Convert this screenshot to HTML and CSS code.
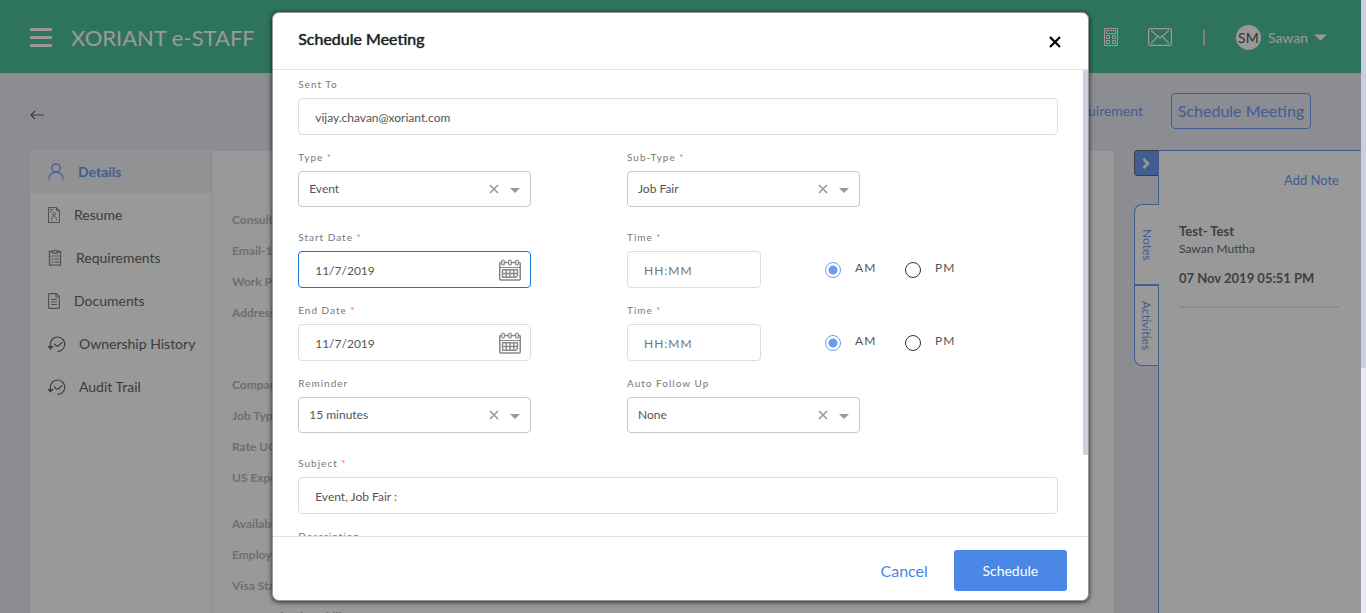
FILE: index.html
```html
<!DOCTYPE html>
<html lang="en">
<head>
<meta charset="utf-8">
<title>XORIANT e-STAFF</title>
<meta name="viewport" content="width=device-width, initial-scale=1">
<link rel="stylesheet" href="styles.css">
</head>
<body>
<svg class="defs" width="0" height="0" aria-hidden="true">
  <symbol id="calendar" viewBox="0 0 22 22">
    <g fill="none" stroke="currentColor">
      <rect x="0.75" y="3.5" width="20.5" height="17.5" rx="1" stroke-width="1.5"/>
      <path d="M1 8.5h20" stroke-width="1"/>
      <rect x="2.7" y="1" width="2.6" height="5" rx="1.3" fill="#fff" stroke-width="1.2"/>
      <rect x="9.7" y="1" width="2.6" height="5" rx="1.3" fill="#fff" stroke-width="1.2"/>
      <rect x="16.7" y="1" width="2.6" height="5" rx="1.3" fill="#fff" stroke-width="1.2"/>
      <path d="M3 10.8h16M3 14.5h16M3 18.2h14M3.5 10.8v7.4M7.3 10.8v7.4M11 10.8v7.4M14.8 10.8v7.4M18.5 10.8v5.5l-2 2" stroke-width="1.4"/>
    </g>
  </symbol>
  <symbol id="cross" viewBox="0 0 10 10"><path d="M1 1l8 8M9 1l-8 8" stroke="currentColor" stroke-width="1.6" fill="none"/></symbol>
  <symbol id="caret" viewBox="0 0 10 5"><path d="M0 0h10L5 5z" fill="currentColor"/></symbol>
  <symbol id="history" viewBox="0 0 18 18">
    <g fill="none" stroke="currentColor" stroke-width="1.2">
      <path d="M2.4 12.5V9A7.2 7.2 0 1 1 9.5 16.4"/>
      <path d="M0.3 11.5h4.2l-2.1 2.3zM6 8.6l2.6 2.6h1.4l4.4-4"/>
    </g>
  </symbol>
</svg>

<div class="page">
  <div class="app">
    <header class="topbar">
      <button class="menu" aria-label="Menu"><span></span><span></span><span></span></button>
      <span class="brand">XORIANT e-STAFF</span>
      <svg class="tb-calc" width="14" height="18" viewBox="0 0 14 18" fill="none" stroke="currentColor" stroke-width="1">
        <path d="M.5.5h13v17H.5zM2.5 2.5h9v3h-9zM2.5 7.5h3v3h-3zM8.5 7.5h3v3h-3zM2.5 12.5h3v3h-3zM8.5 12.5h3v3h-3z"/>
      </svg>
      <svg class="tb-mail" width="24" height="18" viewBox="0 0 24 18" fill="none" stroke="currentColor" stroke-width="1.2">
        <rect x=".6" y=".6" width="22.8" height="16.8" rx="1.5"/><path d="M3 2.5l9 7.5 9-7.5M3 15.5l6.5-7M21 15.5l-6.5-7"/>
      </svg>
      <span class="tb-sep"></span>
      <button class="user"><span class="avatar">SM</span>Sawan<svg width="13" height="7" viewBox="0 0 10 5"><use href="#caret"/></svg></button>
    </header>

    <div class="toolbar">
      <a class="back" href="#" aria-label="Back"><svg width="15" height="10" viewBox="0 0 15 10" fill="none" stroke="currentColor" stroke-width="1.2"><path d="M14 5H1M5 1L1 5l4 4"/></svg></a>
      <a class="link" href="#">Add Requirement</a>
      <button class="outline">Schedule Meeting</button>
    </div>

    <div class="content">
      <nav class="side">
        <a class="active" href="#"><svg width="16" height="17" viewBox="0 0 16 17" fill="none" stroke="currentColor" stroke-width="1.3"><circle cx="8" cy="5" r="4.2"/><path d="M.8 16.5c0-4.5 3-7.3 7.2-7.3s7.2 2.8 7.2 7.3"/></svg><span>Details</span></a>
        <a href="#"><svg width="12" height="16" viewBox="0 0 12 16" fill="none" stroke="currentColor"><path d="M.5.5h8l3 3v12H.5zM8.5.5v3h3"/><path d="M2 2.5h3M2 4.5h2"/><circle cx="6" cy="7" r="1.5" stroke-width=".8"/><path d="M3.5 13.5c0-3 1-4.5 2.500-4.500s2.500 1.500 2.500 4.500" stroke-width=".8"/></svg><span>Resume</span></a>
        <a href="#"><svg width="14" height="17" viewBox="0 0 14 17" fill="none" stroke="currentColor"><path d="M4 2.5H1.5v13.7h11V2.5H10" stroke-width="1.3"/><path d="M4.500 1.800h1.300a1.300 1.300 0 0 1 2.400 0h1.300v2.400h-5z" stroke-width="1.200"/><path d="M3.300 7l.8.8 1.200-1.600M6.500 7H11M3.300 10l.8.8 1.200-1.600M6.500 10H11M3.300 13l.8.8 1.200-1.600M6.500 13H11"/></svg><span>Requirements</span></a>
        <a href="#"><svg width="12" height="16" viewBox="0 0 12 16" fill="none" stroke="currentColor" stroke-width="1.1"><path d="M1.5.6h7l2.900 3v10.800a1 1 0 0 1-1 1H1.600a1 1 0 0 1-1-1V1.600a1 1 0 0 1 .9-1zM8 .6V4h3.400M3 6.500h6M3 9h6M3 11.500h6"/></svg><span>Documents</span></a>
        <a class="log" href="#"><svg width="18" height="18"><use href="#history"/></svg><span>Ownership History</span></a>
        <a class="log" href="#"><svg width="18" height="18"><use href="#history"/></svg><span>Audit Trail</span></a>
      </nav>
      <main class="details">
        <ul><li>Consultant</li><li>Email-1</li><li>Work Phone</li><li>Address</li></ul>
        <ul class="second"><li>Company</li><li>Job Type</li><li>Rate UOM</li><li>US Experience</li></ul>
        <ul><li>Availability</li><li>Employer</li><li>Visa Status</li><li>Communication Skills</li></ul>
      </main>
      <div class="tabs">
        <button class="collapse" aria-label="Collapse panel"><svg width="9" height="11" viewBox="0 0 9 11" fill="none" stroke="currentColor" stroke-width="2.6"><path d="M1.500 1l4.500 4.500L1.500 10"/></svg></button>
        <button class="tab current">Notes</button>
        <button class="tab">Activities</button>
      </div>
      <aside class="notes">
        <a class="add" href="#">Add Note</a>
        <article class="note">
          <h3>Test- Test</h3>
          <p>Sawan Muttha</p>
          <time>07 Nov 2019 05:51 PM</time>
        </article>
      </aside>
    </div>

    <div class="scrim">
      <form class="modal" role="dialog" aria-labelledby="modal-title">
        <header class="modal-head">
          <h2 id="modal-title">Schedule Meeting</h2>
          <button type="button" class="close" aria-label="Close"><svg width="12" height="12" viewBox="0 0 12 12" fill="none" stroke="currentColor" stroke-width="2.2"><path d="M1 1l10 10M11 1L1 11"/></svg></button>
        </header>
        <div class="modal-body">
          <div class="fields">
            <div class="field wide"><label for="to">Sent To</label><input id="to" type="text" value="vijay.chavan@xoriant.com"></div>

            <div class="field drop"><label for="type">Type <i>*</i></label>
              <div class="select"><select id="type"><option>Event</option></select><button type="button" aria-label="Clear type"><svg width="10" height="10"><use href="#cross"/></svg></button><svg class="caret" width="10" height="5"><use href="#caret"/></svg></div></div>
            <div class="field drop"><label for="sub">Sub-Type <i>*</i></label>
              <div class="select"><select id="sub"><option>Job Fair</option></select><button type="button" aria-label="Clear sub-type"><svg width="10" height="10"><use href="#cross"/></svg></button><svg class="caret" width="10" height="5"><use href="#caret"/></svg></div></div>

            <div class="field"><label for="start">Start Date <i>*</i></label>
              <div class="date"><input id="start" class="focused" type="text" value="11/7/2019"><svg width="22" height="22"><use href="#calendar"/></svg></div></div>
            <div class="field"><label for="stime">Time <i>*</i></label>
              <div class="time"><input id="stime" type="text" placeholder="HH:MM">
                <label class="radio"><input type="radio" name="s" checked><span>AM</span></label>
                <label class="radio"><input type="radio" name="s"><span>PM</span></label></div></div>

            <div class="field"><label for="end">End Date <i>*</i></label>
              <div class="date"><input id="end" type="text" value="11/7/2019"><svg width="22" height="22"><use href="#calendar"/></svg></div></div>
            <div class="field"><label for="etime">Time <i>*</i></label>
              <div class="time"><input id="etime" type="text" placeholder="HH:MM">
                <label class="radio"><input type="radio" name="e" checked><span>AM</span></label>
                <label class="radio"><input type="radio" name="e"><span>PM</span></label></div></div>

            <div class="field drop"><label for="rem">Reminder</label>
              <div class="select"><select id="rem"><option>15 minutes</option></select><button type="button" aria-label="Clear reminder"><svg width="10" height="10"><use href="#cross"/></svg></button><svg class="caret" width="10" height="5"><use href="#caret"/></svg></div></div>
            <div class="field drop"><label for="fup">Auto Follow Up</label>
              <div class="select"><select id="fup"><option>None</option></select><button type="button" aria-label="Clear follow up"><svg width="10" height="10"><use href="#cross"/></svg></button><svg class="caret" width="10" height="5"><use href="#caret"/></svg></div></div>

            <div class="field wide"><label for="subject">Subject <i>*</i></label><input id="subject" type="text" value="Event, Job Fair :"></div>
            <div class="field wide"><label for="desc">Description</label><textarea id="desc" rows="4"></textarea></div>
          </div>
          <div class="thumb"></div>
        </div>
        <footer class="modal-foot">
          <button type="button" class="cancel">Cancel</button>
          <button type="submit" class="submit">Schedule</button>
        </footer>
      </form>
    </div>
  </div>
  <div class="page-scroll"><div class="page-thumb"></div></div>
</div>
</body>
</html>
```

FILE: styles.css
```css
* { box-sizing: border-box; }
body { margin: 0; font-family: Lato, "Liberation Sans", sans-serif; color: #6a6a6a; }
button, input, select, textarea { font: inherit; color: inherit; }
button { background: none; border: 0; padding: 0; cursor: pointer; }
a { color: inherit; text-decoration: none; }
svg { display: block; flex: none; }
ul, h2, h3, p { margin: 0; padding: 0; }
ul { list-style: none; }
.defs { position: absolute; }

.page { display: flex; height: 100vh; overflow: hidden; }
.app { position: relative; flex: 1; min-width: 0; display: flex; flex-direction: column; background: #e9ebf5; }
.page-scroll { width: 5px; background: #ebebf5; }
.page-thumb { height: 60%; background: #cdcfdf; }

/* Top bar */
.topbar { flex: none; display: flex; align-items: center; height: 73px; padding: 1px 34px 0 30px; background: #4ec19b; color: #fff; }
.menu { display: grid; gap: 5px; width: 22px; }
.menu span { height: 3px; border-radius: 1px; background: #fff; }
.brand { margin: 0 auto 0 19px; font-size: 22px; }
.tb-mail { margin-left: 30px; }
.tb-sep { width: 2px; height: 15px; margin: 0 31px; background: #e8d3b5; }
.user { display: flex; align-items: center; font-size: 14px; }
.user svg { margin-left: 6px; }
.avatar { width: 25px; margin-right: 7px; border-radius: 50%; background: #fff; color: #555; line-height: 25px; text-align: center; }

/* Page toolbar */
.toolbar { flex: none; display: flex; align-items: center; height: 77px; padding: 0 50px 2px 30px; color: #6d9bf2; }
.back { margin: 8px auto 0 0; color: #666; }
.link { margin-right: 28px; font-size: 14px; }
.outline { width: 140px; height: 36px; border: 1px solid #6d9bf2; border-radius: 4px; font-size: 16px; }

/* Content columns */
.content { flex: 1; min-height: 0; display: flex; padding-left: 30px; }
.side { width: 182px; border-right: 1px solid #e9ebf5; background: #fff; font-size: 14px; }
.side a { display: flex; align-items: center; gap: 14px; height: 43px; padding-left: 18px; color: #666; }
.side svg { color: #888; }
.side .log { gap: 13px; }
.side .log svg { color: #666; }
.side .active { background: #f3f4f8; color: #6d9bf2; font-weight: 700; }
.side .active svg { color: inherit; }
.details { flex: 1; margin-top: 1px; padding: 53px 20px 0; overflow: hidden; background: #fff; font-size: 12px; font-weight: 700; color: #b8b8b8; }
.details li { line-height: 31px; }
.details .second { margin: 41px 0 15px; }
.tabs { width: 44px; padding-left: 20px; display: flex; flex-direction: column; }
.collapse { display: grid; place-items: center; height: 26px; margin-bottom: 28px; border: 1px solid #666; border-right: 0; border-radius: 4px 0 0 4px; background: #6d9bf2; color: #fff; }
.tab { writing-mode: vertical-rl; display: flex; justify-content: center; align-items: center; height: 81px; border: 1px solid #6d9bf2; border-right: 0; border-radius: 0 0 0 8px; background: #fff; font-size: 12px; color: #6d9bf2; }
.tab.current { position: relative; margin-right: -1px; border-radius: 8px 0 0 0; }
.notes { width: 203px; padding: 20px 22px 0 20px; border: 1px solid #6d9bf2; border-width: 1px 0 0 1px; background: #fff; }
.add { display: block; font-size: 13px; line-height: 18px; text-align: right; color: #6d9bf2; }
.note { margin-top: 33px; padding-bottom: 19px; border-bottom: 2px solid #e9ebf5; font-size: 12px; line-height: 18px; }
.note h3, .note time { font-size: 13px; font-weight: 700; }
.note time { display: block; margin-top: 11px; }

/* Dialog */
.scrim { position: absolute; inset: 0; display: flex; justify-content: center; padding: 12px 0; background: rgba(0, 0, 0, .4); }
.modal { display: flex; flex-direction: column; width: 60%; border: 1px solid #999; border-radius: 7px; background: #fff; box-shadow: 0 1px 5px rgba(0, 0, 0, .8); }
.modal-head { flex: none; display: flex; align-items: center; justify-content: space-between; height: 57px; padding: 0 27px 2px 25px; border-bottom: 1px solid #e6e2e2; color: #212529; }
.modal-head h2 { padding-bottom: 3px; font-size: 16px; font-weight: 400; text-shadow: 0 0 1px #212529; }
.close { margin-top: 4px; color: #000; }
.modal-body { flex: 1; min-height: 0; display: flex; overflow: hidden; }
.thumb { width: 5px; height: 385px; background: #cdcfdf; }
.fields { flex: 1; display: grid; grid-template-columns: 329fr 431fr; align-content: start; padding: 7px 25px 0; }
.field { padding-bottom: 15px; font-size: 12px; color: #555; }
.drop { padding-bottom: 23px; }
.wide { grid-column: 1 / -1; }
.field > label { display: block; height: 14px; margin-bottom: 7px; font-size: 10px; line-height: 14px; letter-spacing: 1px; color: #777; }
.field i { font-style: normal; color: #f66; }
.field > input, .date input, .time > input, textarea { display: block; width: 100%; height: 37px; padding: 1px 16px 0; border: 1px solid #ddd; border-radius: 4px; background: #fff; outline: 0; }
.field textarea { height: 100px; }
.field .focused { border-color: #1976d2; }
.date, .select { position: relative; width: 233px; max-width: 90%; }
.date svg { position: absolute; top: 8px; right: 10px; color: #888; }
.select select { display: block; width: 100%; height: 36px; padding: 0 10px 2px; border: 1px solid #c8c8c8; border-radius: 4px; background: #fff; appearance: none; }
.select button { position: absolute; top: 13px; right: 32px; color: #999; }
.caret { position: absolute; top: 17px; right: 11px; color: #999; }
.time { display: flex; align-items: center; }
.time > input { width: 134px; margin-right: 64px; letter-spacing: 1px; }
.radio { display: flex; align-items: center; width: 80px; letter-spacing: 1px; font-size: 12px; }
.radio span { padding-bottom: 4px; }
.radio input { appearance: none; width: 16px; height: 16px; margin: 0 14px 0 0; border: 1px solid #333; border-radius: 50%; }
.radio input:checked { border-color: #6d9bea; background: radial-gradient(circle, #6d9bea 4px, transparent 5px); }
.modal-foot { flex: none; display: flex; align-items: center; justify-content: flex-end; gap: 26px; height: 64px; padding: 3px 21px 0 0; border-top: 1px solid #e9dfe1; font-size: 16px; }
.cancel { color: #4b87e5; }
.submit { width: 113px; height: 41px; border-radius: 3px; background: #4b87e5; color: #fff; font-size: 14px; }
```
